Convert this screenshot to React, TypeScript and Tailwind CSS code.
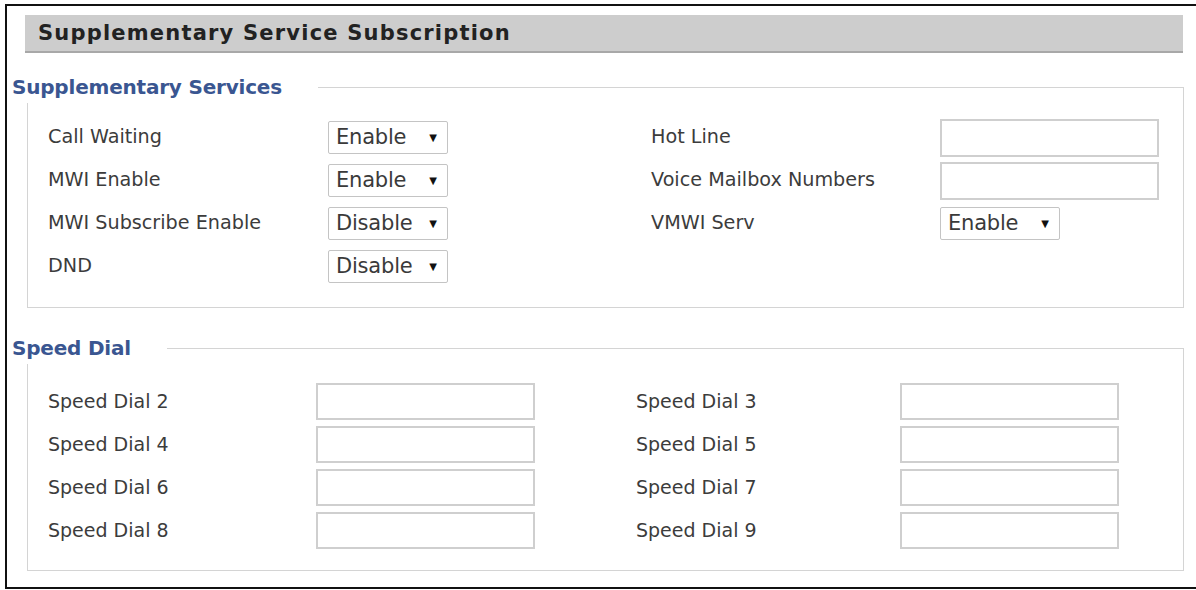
const labelFont = { fontFamily: '"DejaVu Sans", Verdana, sans-serif' };

function Select({ value }: { value: string }) {
  return (
    <div className="flex h-[33px] w-[120px] items-center justify-between rounded-[2px] border border-[#c4c4c4] bg-white pl-[7px] pr-[10px] text-[21px] text-[#3a3a3a]">
      <span className="tracking-[-0.2px]">{value}</span>
      <span className="text-[10px] text-[#111]">▼</span>
    </div>
  );
}

function TextBox({ h }: { h: string }) {
  return <div className={`w-[219px] border-2 border-[#cfcfcf] bg-white ${h}`} />;
}

function Legend({ title }: { title: string }) {
  return (
    <div className="absolute left-[-16px] top-[-15px] bg-white pr-[36px] pb-[2px] text-[20px] font-bold leading-[28px] tracking-[-0.2px] text-[#3a5691]">
      {title}
    </div>
  );
}

export default function App() {
  const services = [
    { label: 'Call Waiting', value: 'Enable' },
    { label: 'MWI Enable', value: 'Enable' },
    { label: 'MWI Subscribe Enable', value: 'Disable' },
    { label: 'DND', value: 'Disable' },
  ];

  const dials = [
    ['Speed Dial 2', 'Speed Dial 3'],
    ['Speed Dial 4', 'Speed Dial 5'],
    ['Speed Dial 6', 'Speed Dial 7'],
    ['Speed Dial 8', 'Speed Dial 9'],
  ];

  return (
    <div className="h-[590px] w-[1196px] overflow-hidden bg-white pl-[5px] pt-[4px]" style={labelFont}>
      <div className="h-[585px] w-[1191px] border-2 border-r-0 border-[#111]">
        {/* Page header */}
        <div className="ml-[18px] mt-[9px] flex h-[38px] w-[1158px] items-center border-b-2 border-[#a8a8a8] bg-[#cdcdcd] pl-[13px]">
          <span
            className="text-[21px] font-bold leading-none tracking-[1.2px] text-[#222]"
            style={{ fontFamily: 'Verdana, "DejaVu Sans", sans-serif' }}
          >
            Supplementary Service Subscription
          </span>
        </div>

        {/* Supplementary Services */}
        <div className="relative ml-[20px] mt-[34px] h-[221px] w-[1157px] border border-[#d4d4d4]">
          <Legend title="Supplementary Services" />
          <div className="grid grid-cols-[280px_323px_289px_auto] grid-rows-[43px_43px_43px_43px] pl-[20px] pt-[28px] text-[19.2px] text-[#3c3c3c]">
            {services.map((s, i) => (
              <div key={s.label} className="contents">
                <div className="flex items-center">{s.label}</div>
                <div className="flex items-center">
                  <Select value={s.value} />
                </div>
                <div className="flex items-center">
                  {i === 0 && 'Hot Line'}
                  {i === 1 && 'Voice Mailbox Numbers'}
                  {i === 2 && 'VMWI Serv'}
                </div>
                <div className="flex items-center">
                  {i < 2 && <TextBox h="h-[38px]" />}
                  {i === 2 && <Select value="Enable" />}
                </div>
              </div>
            ))}
          </div>
        </div>

        {/* Speed Dial */}
        <div className="relative ml-[20px] mt-[40px] h-[223px] w-[1157px] border border-[#d4d4d4]">
          <Legend title="Speed Dial" />
          <div className="grid grid-cols-[268px_320px_264px_auto] grid-rows-[43px_43px_43px_43px] pl-[20px] pt-[31px] text-[19px] text-[#3c3c3c]">
            {dials.map(([a, b]) => (
              <div key={a} className="contents">
                <div className="flex items-center">{a}</div>
                <div className="flex items-center">
                  <TextBox h="h-[37px]" />
                </div>
                <div className="flex items-center">{b}</div>
                <div className="flex items-center">
                  <TextBox h="h-[37px]" />
                </div>
              </div>
            ))}
          </div>
        </div>
      </div>
    </div>
  );
}
